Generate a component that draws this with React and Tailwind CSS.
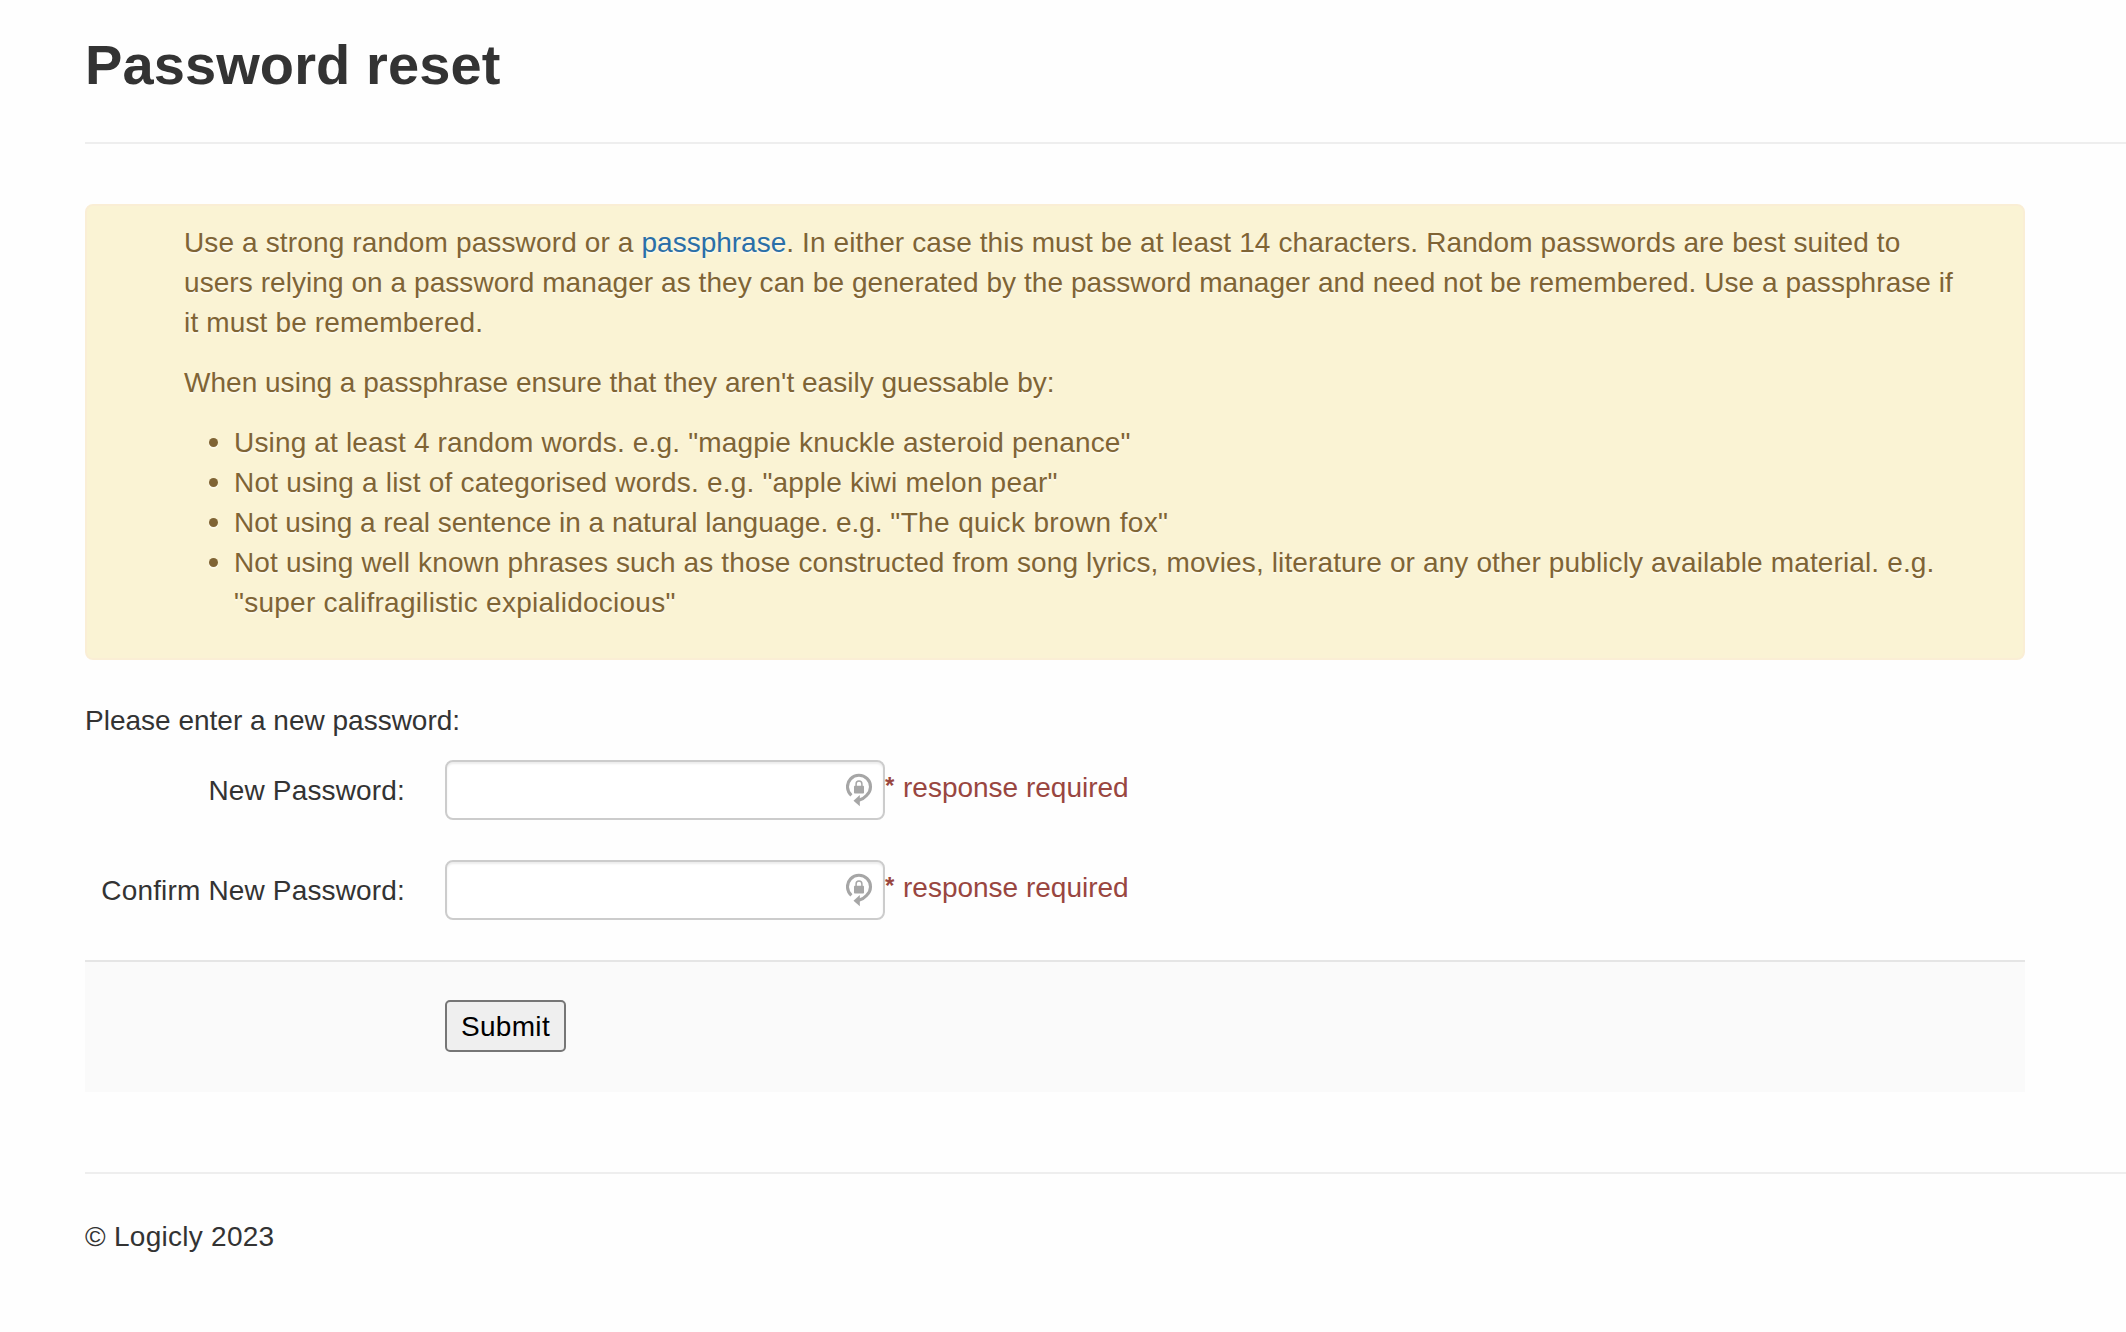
// Each tip is a list of lines; each line is a list of [text, tracking] runs.
const TIPS = [
  [[['Using at least 4 random words. e.g. "magpie knuckle asteroid penance"', "tracking-[0.165px]"]]],
  [[['Not using a list of categorised words. e.g. "apple kiwi melon pear"', "tracking-[0.195px]"]]],
  [
    [
      ["Not using a real sentence in a natural language. e.g. ", "tracking-[-0.01px]"],
      ['"The quick brown fox"', "tracking-[0.36px]"],
    ],
  ],
  [
    [
      [
        "Not using well known phrases such as those constructed from song lyrics, movies, literature or any other publicly available material. e.g.",
        "tracking-[0.131px]",
      ],
    ],
    [['"super califragilistic expialidocious"', "tracking-[0.245px]"]],
  ],
];

function ResetLockIcon() {
  return (
    <svg className="h-[34px] w-7" viewBox="0 0 28 34" fill="none" aria-hidden="true">
      <path d="M5.4 22.4A11.5 11.5 0 1 1 20.8 22.2Q17.4 26 12.8 27.2" stroke="#a6a6a6" strokeWidth="3.1" />
      <path d="M7.5 27.7 13.8 22V33.2Z" fill="#a6a6a6" />
      <rect x="8" y="12.8" width="10" height="7.8" rx="0.8" fill="#a6a6a6" />
      <path d="M10.1 13.2V11A2.9 2.9 0 0 1 15.9 11V13.2" stroke="#a6a6a6" strokeWidth="1.5" />
    </svg>
  );
}

function PasswordField({ id, label }) {
  return (
    <div className="flex h-[60px]">
      <label htmlFor={id} className="w-[320px] pt-[11px] text-right tracking-[0.16px]">
        {label}
      </label>
      <div className="relative ml-10 h-[60px] w-[440px]">
        <input
          id={id}
          type="password"
          className="h-full w-full rounded-lg border-2 border-[#ccc] bg-white px-3 shadow-[inset_0_2px_2px_rgba(0,0,0,0.075)] outline-none"
        />
        <span className="absolute top-[13px] right-[11px]">
          <ResetLockIcon />
        </span>
      </div>
      <span className="flex pt-2 text-[#994640]">
        <span className="-mt-0.5 w-[18px] text-[24px] font-bold">*</span>
        <span>response required</span>
      </span>
    </div>
  );
}

export default function App() {
  return (
    <main className="min-h-screen overflow-hidden bg-[#fefefe] pl-[85px] font-['Liberation_Sans',Arial,sans-serif] text-[28px] leading-10 whitespace-nowrap text-[#333]">
      <header className="h-36 border-b-2 border-[#eee] pt-[25px]">
        <h1 className="text-[56px] leading-[80px] font-bold tracking-[0.1px]">Password reset</h1>
      </header>

      <div className="mt-[60px] w-[1940px]">
        <section className="h-[456px] rounded-lg border-2 border-[#faeed5] bg-[#faf3d4] pt-[17px] pl-[97px] text-[#7f6435] [text-shadow:0_2px_0_rgba(255,255,255,0.5)]">
          <p>
            <span className="block">
              <span className="tracking-[0.135px]">Use a strong random password or a </span>
              <a href="#passphrase" className="text-[#2a6fa8]">passphrase</a>
              <span className="tracking-[0.12px]">
                . In either case this must be at least 14 characters. Random passwords are best suited to
              </span>
            </span>
            <span className="block tracking-[0.065px]">
              users relying on a password manager as they can be generated by the password manager and need not be remembered. Use a passphrase if
            </span>
            <span className="block tracking-[0.155px]">it must be remembered.</span>
          </p>
          <p className="mt-5 tracking-[0.02px]">
            When using a passphrase ensure that they aren't easily guessable by:
          </p>
          <ul className="mt-5 ml-[25px]">
            {TIPS.map((lines) => (
              <li key={lines[0][0][0]} className="flex">
                <span className="mt-[15px] mr-4 size-[9px] shrink-0 rounded-full bg-[#7f6435] shadow-[0_2px_0_rgba(255,255,255,0.5)]" />
                <span>
                  {lines.map((runs) => (
                    <span key={runs[0][0]} className="block">
                      {runs.map(([text, tracking]) => (
                        <span key={text} className={tracking}>{text}</span>
                      ))}
                    </span>
                  ))}
                </span>
              </li>
            ))}
          </ul>
        </section>

        <form className="mt-[41px]" onSubmit={(e) => e.preventDefault()}>
          <p>Please enter a new password:</p>
          <div className="mt-[19px] flex flex-col gap-10">
            <PasswordField id="new-password" label="New Password:" />
            <PasswordField id="confirm-password" label="Confirm New Password:" />
          </div>
          <div className="mt-10 h-[132px] border-t-2 border-[#e5e5e5] bg-[#fafafa] pt-[38px] pl-[360px]">
            <button
              type="submit"
              className="flex h-[52px] w-[121px] items-center justify-center rounded-[5px] border-2 border-[#767676] bg-[#efefef] pt-px tracking-[0.3px] text-black"
            >
              Submit
            </button>
          </div>
        </form>
      </div>

      <footer className="mt-20 border-t-2 border-[#eee] pt-[43px] tracking-[0.27px]">© Logicly 2023</footer>
    </main>
  );
}
